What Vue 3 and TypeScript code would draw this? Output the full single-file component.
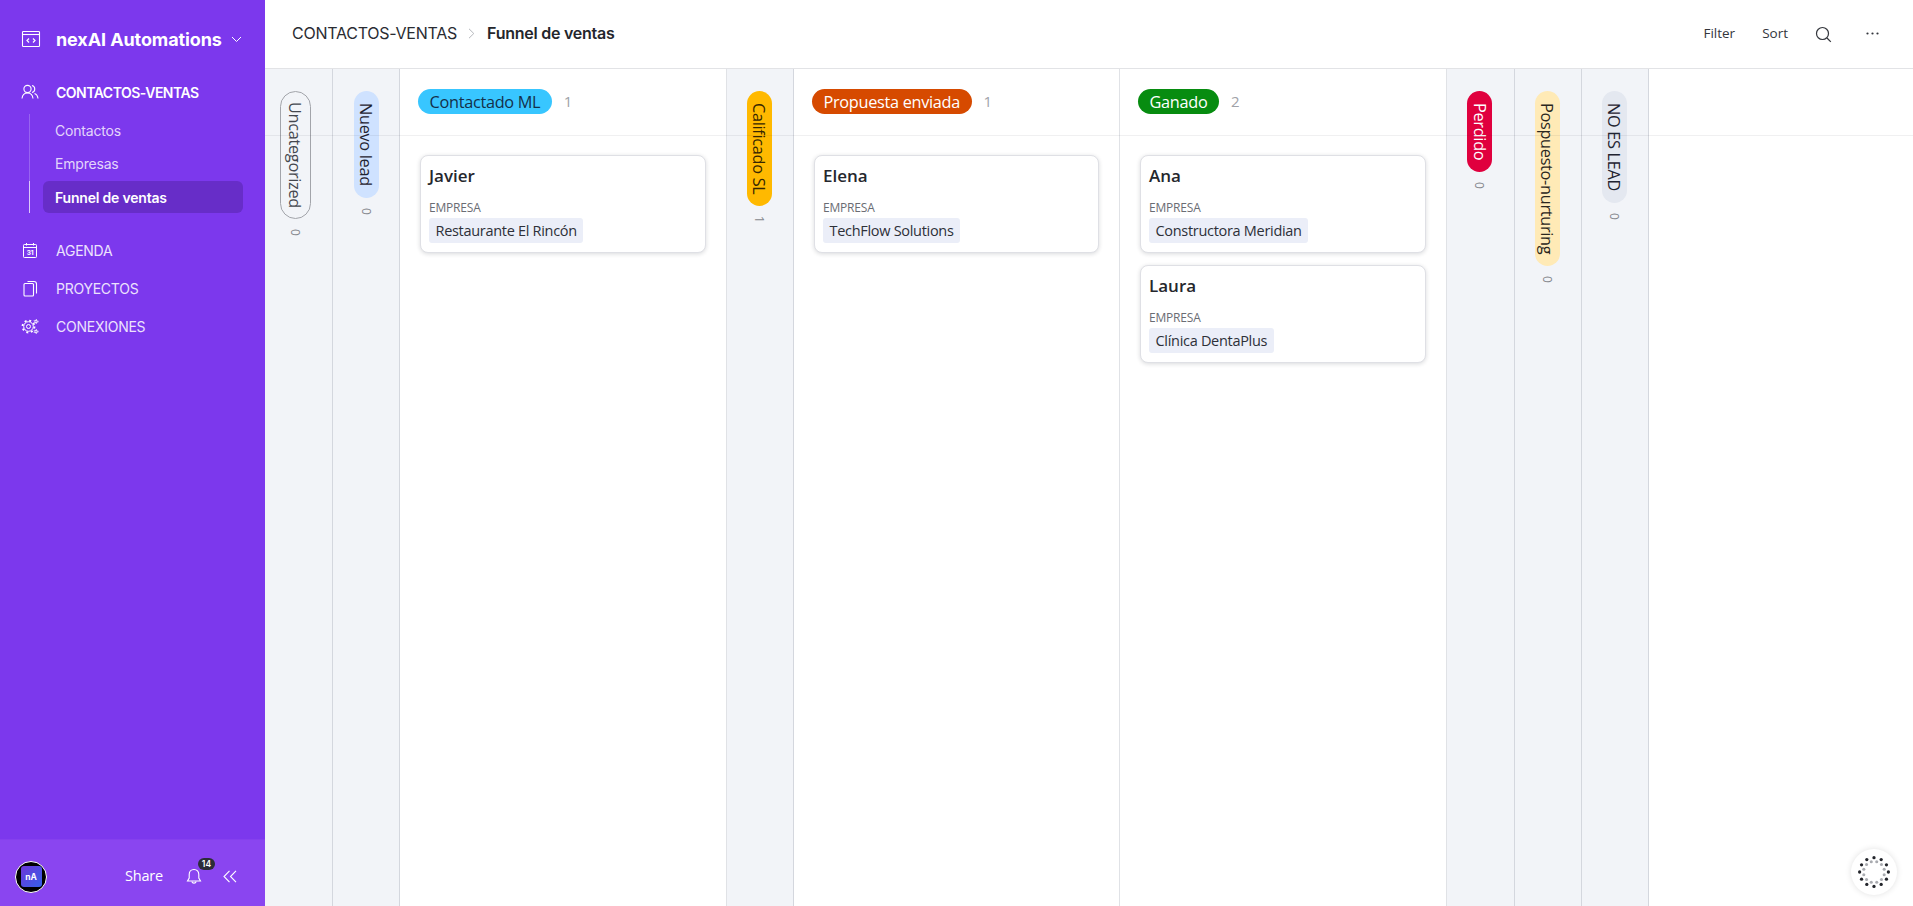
<script setup lang="ts">
interface Card { name: string; company: string }
interface Col { title: string; count: number; cls: string; open: boolean; w: number; cards: Card[] }

const cols: Col[] = [
  { title: 'Uncategorized', count: 0, cls: 'uncat', open: false, w: 68, cards: [] },
  { title: 'Nuevo lead', count: 0, cls: 'nuevo', open: false, w: 67, cards: [] },
  { title: 'Contactado ML', count: 1, cls: 'contactado', open: true, w: 327, cards: [{ name: 'Javier', company: 'Restaurante El Rincón' }] },
  { title: 'Calificado SL', count: 1, cls: 'calificado', open: false, w: 67, cards: [] },
  { title: 'Propuesta enviada', count: 1, cls: 'propuesta', open: true, w: 326, cards: [{ name: 'Elena', company: 'TechFlow Solutions' }] },
  { title: 'Ganado', count: 2, cls: 'ganado', open: true, w: 327, cards: [{ name: 'Ana', company: 'Constructora Meridian' }, { name: 'Laura', company: 'Clínica DentaPlus' }] },
  { title: 'Perdido', count: 0, cls: 'perdido', open: false, w: 68, cards: [] },
  { title: 'Pospuesto-nurturing', count: 0, cls: 'pospuesto', open: false, w: 67, cards: [] },
  { title: 'NO ES LEAD', count: 0, cls: 'noes', open: false, w: 67, cards: [] },
]

const ring = (r: number, offset: number) =>
  Array.from({ length: 12 }, (_, i) => {
    const a = ((i * 30 + offset - 90) * Math.PI) / 180
    return { x: 24 + r * Math.cos(a), y: 24 + r * Math.sin(a) }
  })
const outer = ring(15, 0)
const inner = ring(11, 15)
</script>

<template>
  <div class="app">
    <aside class="sidebar">
      <div class="brand">
        <svg class="brand-icon" width="20" height="18" viewBox="0 0 20 18" fill="none" stroke="#fff" stroke-width="1.1">
          <rect x="1.5" y="1.5" width="17" height="15" rx="0.8" />
          <path d="M1.5 4.5h17" />
          <path d="M8 8.5l-2 2 2 2M12 8.5l2 2-2 2" stroke-width="1.2" />
        </svg>
        <span class="brand-name">nexAI Automations</span>
        <svg class="brand-chev" width="11" height="7" viewBox="0 0 11 7" fill="none" stroke="#fff" stroke-width="1"><path d="M1 1l4.500 4.500L10 1" /></svg>
      </div>

      <nav class="nav">
        <div class="nav-row strong">
          <svg class="nav-icon" width="18" height="16" viewBox="0 0 18 16" fill="none" stroke="#fff" stroke-width="1.1">
            <circle cx="6.500" cy="5" r="3.600" />
            <path d="M1 14.500c.4-3.400 2.600-5.500 5.500-5.500s5.100 2.100 5.500 5.500" />
            <path d="M11 1.500a3.600 3.600 0 0 1 0 7M13.500 9.500c2 .7 3.200 2.500 3.500 5" />
          </svg>
          <span>CONTACTOS-VENTAS</span>
        </div>
        <div class="sub">
          <div class="sub-row">Contactos</div>
          <div class="sub-row">Empresas</div>
          <div class="sub-row active">Funnel de ventas</div>
        </div>
        <div class="nav-group">
          <div class="nav-row">
            <svg class="nav-icon" width="16" height="17" viewBox="0 0 16 17" fill="none" stroke="#fff" stroke-width="1">
              <rect x="1.500" y="2.500" width="13" height="13" rx="0.800" />
              <path d="M1.500 5.500h13M4.500 1v2.500M11.500 1v2.500" />
              <text x="8" y="13.200" text-anchor="middle" class="cal-num">31</text>
            </svg>
            <span>AGENDA</span>
          </div>
          <div class="nav-row">
            <svg class="nav-icon" width="16" height="17" viewBox="0 0 16 17" fill="none" stroke="#fff" stroke-width="1.100">
              <path d="M3 3.500h7.500a1 1 0 0 1 1 1v10.500a1 1 0 0 1-1 1h-7.500a1 1 0 0 1-1-1v-10.500a1 1 0 0 1 1-1z" />
              <path d="M5.500 1.500h6.500a2.500 2.500 0 0 1 2.500 2.500v9.500" />
            </svg>
            <span>PROYECTOS</span>
          </div>
          <div class="nav-row">
            <svg class="nav-icon" width="18" height="17" viewBox="0 0 18 17" fill="none" stroke="#fff">
              <circle cx="7.500" cy="8.500" r="2" stroke-width="1" />
              <circle cx="7.500" cy="8.500" r="4.800" stroke-width="1" />
              <circle cx="7.500" cy="8.500" r="6" stroke-width="1.800" stroke-dasharray="2 2.710" />
              <circle cx="15" cy="3.500" r="1.100" stroke-width="1" />
              <circle cx="15" cy="3.500" r="2" stroke-width="1" stroke-dasharray="1 1.090" />
              <circle cx="15" cy="13.500" r="1.100" stroke-width="1" />
              <circle cx="15" cy="13.500" r="2" stroke-width="1" stroke-dasharray="1 1.090" />
            </svg>
            <span>CONEXIONES</span>
          </div>
        </div>
      </nav>

      <div class="foot">
        <div class="avatar"><div class="avatar-in">nA</div></div>
        <span class="share">Share</span>
        <div class="bell">
          <svg width="16" height="18" viewBox="0 0 16 18" fill="none" stroke="#fff" stroke-width="1.100">
            <path d="M8 1.500c-3 0-4.800 2.200-4.800 5v3.500L1.500 13h13l-1.700-3V6.500c0-2.800-1.800-5-4.800-5z" />
            <path d="M5.800 13.500a2.300 2.300 0 0 0 4.400 0" />
          </svg>
          <span class="badge">14</span>
        </div>
        <svg class="collapse" width="14" height="13" viewBox="0 0 14 13" fill="none" stroke="#fff" stroke-width="1.100">
          <path d="M6.500 .8L1 6.500l5.500 5.700M13 .8L7.500 6.500l5.500 5.700" />
        </svg>
      </div>
    </aside>

    <main class="main">
      <header class="top">
        <div class="crumbs">
          <span class="crumb">CONTACTOS-VENTAS</span>
          <svg width="7" height="11" viewBox="0 0 7 11" fill="none" stroke="#b5b7bc" stroke-width="1"><path d="M1 .8l4.800 4.700L1 10.200" /></svg>
          <span class="crumb current">Funnel de ventas</span>
        </div>
        <div class="actions">
          <span class="act first">Filter</span>
          <span class="act">Sort</span>
          <svg class="search" width="17" height="17" viewBox="0 0 17 17" fill="none" stroke="#33363c" stroke-width="1.200">
            <circle cx="7.500" cy="7.500" r="6" />
            <path d="M12 12l3.800 3.800" />
          </svg>
          <svg class="more" width="13" height="3" viewBox="0 0 13 3" fill="#33363c">
            <circle cx="1.500" cy="1.500" r="1.100" />
            <circle cx="6.500" cy="1.500" r="1.100" />
            <circle cx="11.500" cy="1.500" r="1.100" />
          </svg>
        </div>
      </header>

      <section class="board">
        <template v-for="c in cols" :key="c.title">
          <div v-if="c.open" class="col" :style="{ width: c.w + 'px' }">
            <div class="col-head">
              <span class="pill" :class="c.cls">{{ c.title }}</span>
              <span class="count">{{ c.count }}</span>
            </div>
            <div class="col-body">
              <article v-for="card in c.cards" :key="card.name" class="card">
                <h3 class="card-name">{{ card.name }}</h3>
                <div class="card-label">EMPRESA</div>
                <span class="tag">{{ card.company }}</span>
              </article>
            </div>
          </div>
          <div v-else class="rail" :class="'rail-' + c.cls" :style="{ width: c.w + 'px' }">
            <span class="pill vert" :class="c.cls">{{ c.title }}</span>
            <span class="rail-count">{{ c.count }}</span>
          </div>
        </template>
        <div class="head-line"></div>
      </section>
    </main>

    <div class="spinner">
      <svg width="48" height="48" viewBox="0 0 48 48">
        <circle v-for="(d, i) in outer" :key="'o' + i" :cx="d.x" :cy="d.y" r="1.700" fill="#23252b" />
        <circle v-for="(d, i) in inner" :key="'i' + i" :cx="d.x" :cy="d.y" r="1.600" fill="#a9abb0" />
      </svg>
    </div>
  </div>
</template>

<style>
html, body { margin: 0; padding: 0; background: #fff; }
</style>

<style scoped>
.app {
  position: relative;
  display: flex;
  width: 1913px;
  height: 906px;
  overflow: hidden;
  font-family: Inter, "Liberation Sans", sans-serif;
  color: #24262c;
}

/* Sidebar */
.sidebar {
  width: 265px;
  flex: none;
  display: flex;
  flex-direction: column;
  background: #7c38ed;
  color: #fff;
}
.brand {
  height: 78px;
  flex: none;
  display: flex;
  align-items: center;
  padding-left: 21px;
}
.brand-icon { margin-right: 15px; }
.brand-name { font-size: 18px; font-weight: 700; letter-spacing: -0.1px; }
.brand-chev { margin-left: 9px; }

.nav { flex: 1; display: flex; flex-direction: column; }
.nav-row {
  height: 38px;
  display: flex;
  align-items: center;
  font-size: 14px;
  letter-spacing: -0.25px;
  color: #ece2fd;
}
.nav-row.strong { margin-top: -5px; color: #fff; font-weight: 600; letter-spacing: -0.5px; }
.nav-icon { width: 18px; margin-left: 21px; margin-right: 17px; flex: none; }
.cal-num { fill: #fff; stroke: none; font-size: 6.500px; font-weight: 700; font-family: Inter, sans-serif; }

.sub {
  margin: 3px 0 0 29px;
  padding-left: 13px;
  width: 200px;
  border-left: 1px solid rgba(255, 255, 255, 0.22);
  display: flex;
  flex-direction: column;
  gap: 1.500px;
}
.sub-row {
  position: relative;
  height: 32px;
  display: flex;
  align-items: center;
  padding-left: 12px;
  font-size: 14px;
  letter-spacing: -0.2px;
  color: #e3d5fb;
  border-radius: 6px;
}
.sub-row.active { background: #672dc8; color: #fff; font-weight: 600; }
.sub-row.active::before {
  content: "";
  position: absolute;
  left: -14px;
  top: 0;
  bottom: 0;
  width: 1px;
  background: rgba(255, 255, 255, 0.65);
}
.nav-group { margin-top: 18px; }

.foot {
  height: 67px;
  flex: none;
  box-sizing: border-box;
  padding: 7px 0 0 15px;
  display: flex;
  align-items: center;
  background: #8a45f0;
  border-top: 1px solid #8540ee;
}
.avatar {
  width: 32px;
  height: 32px;
  box-sizing: border-box;
  border-radius: 50%;
  background: #000;
  border: 1px solid #fff;
  display: flex;
  align-items: center;
  justify-content: center;
}
.avatar-in {
  width: 21px;
  height: 21px;
  border-radius: 3px;
  background: linear-gradient(135deg, #6d36d8, #3560e8);
  color: #fff;
  font-size: 8.500px;
  font-weight: 700;
  display: flex;
  align-items: center;
  justify-content: center;
}
.share {
  margin-left: 78px;
  margin-top: -2px;
  font-family: "Open Sans", "Noto Sans", sans-serif;
  font-size: 14.500px;
  letter-spacing: -0.2px;
}
.bell {
  position: relative;
  margin-left: 23px;
  width: 16px;
  height: 18px;
}
.badge {
  position: absolute;
  left: 12px;
  top: -10px;
  width: 17px;
  height: 12px;
  border-radius: 7px;
  background: #2b2d38;
  color: #fff;
  font-size: 8.500px;
  font-weight: 600;
  line-height: 12px;
  text-align: center;
}
.collapse { margin-left: 21px; }

/* Main */
.main { flex: 1; min-width: 0; display: flex; flex-direction: column; }
.top {
  height: 69px;
  flex: none;
  box-sizing: border-box;
  border-bottom: 1px solid #e2e3e6;
  display: flex;
  align-items: center;
  justify-content: space-between;
  padding: 0 34px 2px 27px;
}
.crumbs { display: flex; align-items: center; gap: 11px; }
.crumb { font-size: 16px; letter-spacing: -0.25px; color: #2a2c32; }
.crumb.current { font-weight: 600; color: #24262c; letter-spacing: -0.25px; margin-left: 1px; }
.actions {
  display: flex;
  align-items: center;
  font-family: "Open Sans", "Noto Sans", sans-serif;
  font-size: 13.500px;
  color: #33363c;
}
.act + .act { margin-left: 27px; }
.search { margin-left: 27px; margin-top: 2px; }
.more { margin-left: 34px; }

/* Board */
.board {
  position: relative;
  flex: 1;
  min-height: 0;
  display: flex;
  font-family: "Open Sans", "Noto Sans", sans-serif;
}
.head-line {
  position: absolute;
  left: 0;
  right: 0;
  top: 66px;
  height: 1px;
  background: rgba(40, 44, 60, 0.07);
  pointer-events: none;
}
.col {
  flex: none;
  box-sizing: border-box;
  border-right: 1px solid #e0e2e6;
}
.col-head {
  height: 66px;
  box-sizing: border-box;
  padding: 20px 0 0 18px;
  display: flex;
  align-items: flex-start;
}
.col-body {
  padding: 20px 20px 0 20px;
  display: flex;
  flex-direction: column;
  gap: 12px;
}
.pill {
  display: inline-flex;
  align-items: center;
  height: 25px;
  box-sizing: border-box;
  padding: 0 11.500px;
  border-radius: 13px;
  font-size: 16.300px;
  white-space: nowrap;
  letter-spacing: -0.3px;
}
.count {
  margin-left: 12px;
  font-size: 15px;
  line-height: 25px;
  color: #a0a2a8;
}
.card {
  box-sizing: border-box;
  height: 98px;
  padding: 8px 8px 0;
  background: #fff;
  border: 1px solid #dfe0e5;
  border-radius: 8px;
  box-shadow: 0 1px 4px rgba(20, 24, 40, 0.16);
}
.card-name {
  margin: 0;
  font-size: 17px;
  line-height: 24px;
  font-weight: 600;
  color: #25272d;
}
.card-label {
  margin-top: 12px;
  font-size: 12px;
  line-height: 16px;
  color: #6a6c73;
  letter-spacing: -0.2px;
}
.tag {
  display: block;
  width: fit-content;
  height: 25px;
  margin-top: 2px;
  padding: 0 6.500px;
  border-radius: 3px;
  background: #ebeef8;
  font-size: 14.500px;
  line-height: 25px;
  letter-spacing: -0.3px;
  color: #2d3038;
}

.rail {
  flex: none;
  box-sizing: border-box;
  background: #f2f4f8;
  border-right: 1px solid #d4d7de;
  display: flex;
  flex-direction: column;
  align-items: center;
  padding: 22px 2px 0 0;
}
.rail-uncat { padding-right: 7px; }
.rail-nuevo { padding-right: 0; }
.pill.vert {
  writing-mode: vertical-rl;
  width: 25px;
  height: auto;
  padding: 12px 0;
  justify-content: center;
  align-items: center;
}
.rail-count {
  writing-mode: vertical-rl;
  margin-top: 10px;
  font-size: 12px;
  color: #85878d;
}

.pill.vert.uncat { width: 31px; padding: 10px 0; border: 1px solid #a2a4aa; border-radius: 16px; color: #44474e; }
.nuevo { background: #cfe2ff; color: #1f2330; }
.contactado { background: #38c6ff; color: #14304a; }
.calificado { background: #ffb900; color: #352600; }
.propuesta { background: #d64a00; color: #fff; }
.ganado { background: #078c10; color: #fff; }
.perdido { background: #e0003e; color: #fff; }
.pospuesto { background: #ffeab6; color: #2a2620; }
.noes { background: #e4e8f0; color: #1f2330; }

.spinner {
  position: absolute;
  right: 16px;
  bottom: 11px;
  width: 46px;
  height: 46px;
  border-radius: 50%;
  background: #fff;
  box-shadow: 0 0 6px rgba(0, 0, 0, 0.12);
  display: flex;
  align-items: center;
  justify-content: center;
}
</style>
